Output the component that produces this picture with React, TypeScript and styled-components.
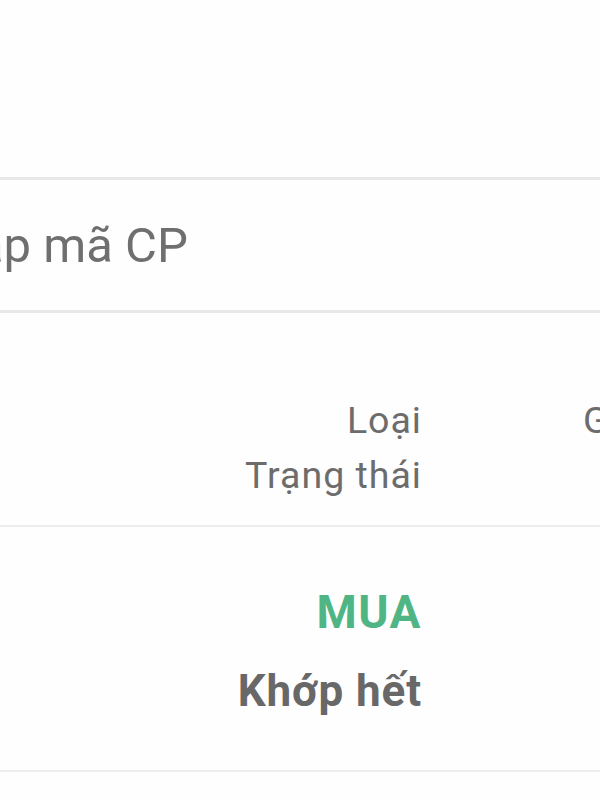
import React from "react";
import styled, { createGlobalStyle } from "styled-components";

const Global = createGlobalStyle`
  html, body { margin: 0; padding: 0; background: #fefefe; }
  body { font-family: Roboto, "Noto Sans", "Liberation Sans", sans-serif; }
  #root { width: 600px; height: 800px; overflow: hidden; }
`;

const Viewport = styled.div`
  width: 600px;
  height: 800px;
  overflow: hidden;
  background: #fefefe;
`;

const Screen = styled.div`
  width: 820px;
  margin-left: -200px;
  display: flex;
  flex-direction: column;
`;

const TopSpace = styled.div`
  height: 177px;
`;

const SearchBar = styled.div`
  height: 130px;
  border-top: 3px solid #e8e8e8;
  border-bottom: 3px solid #e8e8e8;
  display: flex;
  align-items: center;
  padding-left: 115px;
  box-sizing: content-box;
`;

const Placeholder = styled.span`
  font-size: 49px;
  color: #6f6f6f;
  line-height: normal;
  letter-spacing: 0;
`;

const Row = styled.div<{ $pt: number; $pb: number }>`
  display: grid;
  grid-template-columns: 622px 1fr;
  column-gap: 161px;
  padding-top: ${(p) => p.$pt}px;
  padding-bottom: ${(p) => p.$pb}px;
  border-bottom: 2px solid #ededed;
`;

const Cell = styled.div<{ $align: "left" | "right" }>`
  display: flex;
  flex-direction: column;
  align-items: ${(p) => (p.$align === "right" ? "flex-end" : "flex-start")};
`;

const HeadText = styled.span`
  font-size: 37.5px;
  line-height: 55px;
  color: #6c6c6c;
  letter-spacing: 1px;
`;

const Side = styled.span<{ $buy?: boolean }>`
  font-size: 46px;
  line-height: 1.2;
  font-weight: 700;
  letter-spacing: 1.5px;
  color: ${(p) => (p.$buy ? "#50b585" : "#e05a5a")};
`;

const Status = styled.span`
  margin-top: 25px;
  font-size: 44px;
  line-height: 1.2;
  font-weight: 700;
  letter-spacing: 0.9px;
  color: #686868;
`;

export default function App() {
  return (
    <Viewport>
      <Global />
      <Screen>
        <TopSpace />
        <SearchBar>
          <Placeholder>Nhập mã CP</Placeholder>
        </SearchBar>
        <Row $pt={80} $pb={22}>
          <Cell $align="right">
            <HeadText>Loại</HeadText>
            <HeadText>Trạng thái</HeadText>
          </Cell>
          <Cell $align="left">
            <HeadText>Giá</HeadText>
          </Cell>
        </Row>
        <Row $pt={58} $pb={52}>
          <Cell $align="right">
            <Side $buy>MUA</Side>
            <Status>Khớp hết</Status>
          </Cell>
          <Cell $align="left" />
        </Row>
      </Screen>
    </Viewport>
  );
}
